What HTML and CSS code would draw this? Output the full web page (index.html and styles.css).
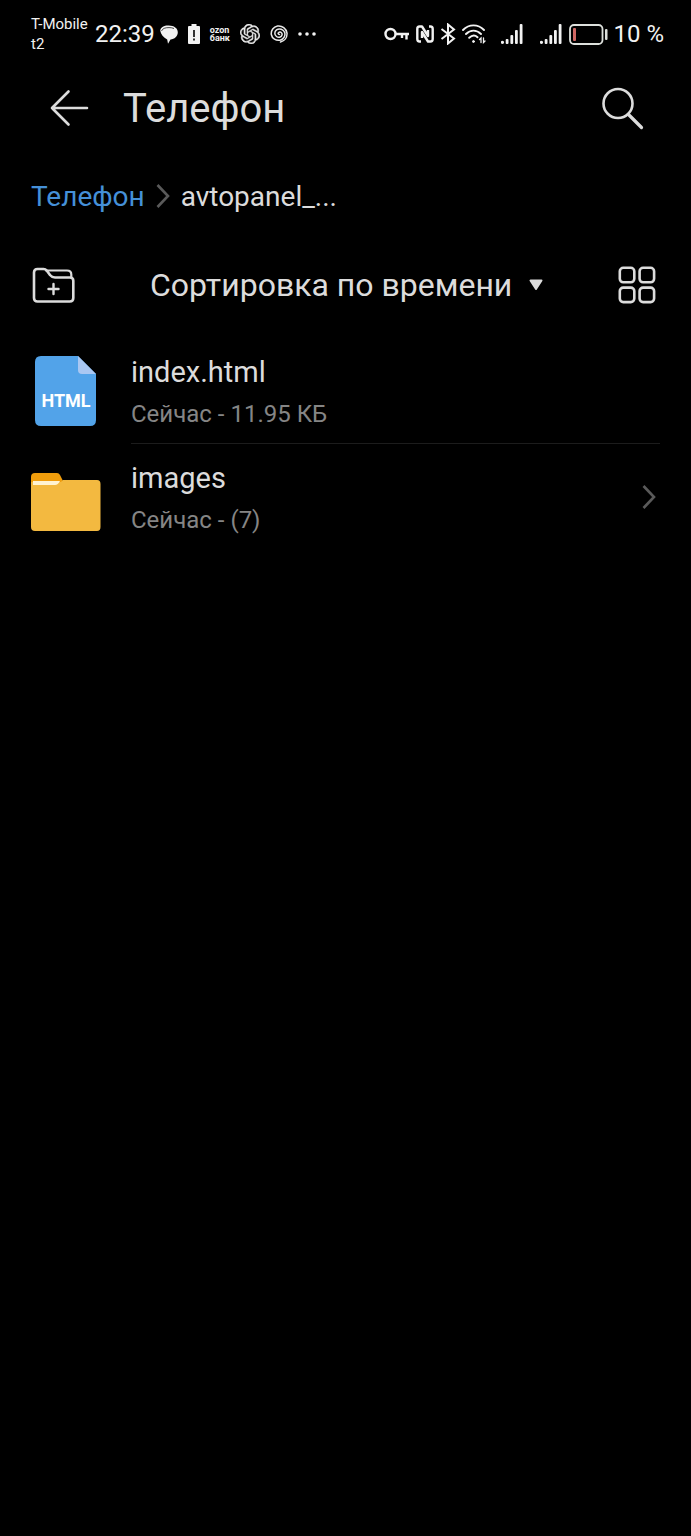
FILE: index.html
```html
<!DOCTYPE html>
<html lang="ru">
<head>
    <meta charset="UTF-8">
    <meta name="viewport" content="width=device-width, initial-scale=1.0">
    <title>Телефон</title>
    <link rel="stylesheet" href="styles.css">
</head>
<body>
    <!-- Строка состояния -->
    <div class="status-bar">
        <div class="status-group">
            <div class="carrier">
                <span>T-Mobile</span>
                <span>t2</span>
            </div>
            <span class="clock">22:39</span>
            <div class="notifications">
                <svg width="18" height="20" viewBox="0 0 18 20">
                    <path fill="#f2f2f2" d="M8 1.500C13.500 1.200 17.800 4 17.800 8.300C17.800 12.500 14.500 15.200 10.500 15.600L8 19.800L7.200 15.400C3.500 13.500 .8 10.500 .2 6.500C.8 3.200 4 1.600 8 1.500Z"/>
                    <path fill="none" stroke="#000" stroke-width="0.700" d="M1.500 7C2.500 4.500 5 3.600 9 3.600C11 3.600 12.500 3.900 14 4.500"/>
                </svg>
                <svg width="12" height="20" viewBox="0 0 12 20">
                    <path fill="#f2f2f2" d="M3.500 0h5v2H11a1 1 0 0 1 1 1v16a1 1 0 0 1-1 1H1a1 1 0 0 1-1-1V3a1 1 0 0 1 1-1h2.500z"/>
                    <path stroke="#000" stroke-width="1.600" d="M6 6v7M6 14.500v2"/>
                </svg>
                <span class="bank"><span>ozon</span><span>банк</span></span>
                <svg width="20" height="20" viewBox="0 0 24 24">
                    <path fill="#e8e8e8" stroke="#e8e8e8" stroke-width="0.500" d="M22.2819 9.8211a5.9847 5.9847 0 0 0-.5157-4.9108 6.0462 6.0462 0 0 0-6.5098-2.9A6.0651 6.0651 0 0 0 4.9807 4.1818a5.9847 5.9847 0 0 0-3.9977 2.9 6.0462 6.0462 0 0 0 .7427 7.0966 5.98 5.98 0 0 0 .511 4.9107 6.051 6.051 0 0 0 6.5146 2.9001A5.9847 5.9847 0 0 0 13.2599 24a6.0557 6.0557 0 0 0 5.7718-4.2058 5.9894 5.9894 0 0 0 3.9977-2.9001 6.0557 6.0557 0 0 0-.7475-7.0729zm-9.022 12.6081a4.4755 4.4755 0 0 1-2.8764-1.0408l.1419-.0804 4.7783-2.7582a.7948.7948 0 0 0 .3927-.6813v-6.7369l2.02 1.1686a.071.071 0 0 1 .038.052v5.5826a4.504 4.504 0 0 1-4.4945 4.4944zm-9.6607-4.1254a4.4708 4.4708 0 0 1-.5346-3.0137l.142.0852 4.783 2.7582a.7712.7712 0 0 0 .7806 0l5.8428-3.3685v2.3324a.0804.0804 0 0 1-.0332.0615L9.74 19.9502a4.4992 4.4992 0 0 1-6.1408-1.6464zM2.3408 7.8956a4.485 4.485 0 0 1 2.3655-1.9728V11.6a.7664.7664 0 0 0 .3879.6765l5.8144 3.3543-2.0201 1.1685a.0757.0757 0 0 1-.071 0l-4.8303-2.7865A4.504 4.504 0 0 1 2.3408 7.872zm16.5963 3.8558L13.1038 8.364 15.1192 7.2a.0757.0757 0 0 1 .071 0l4.8303 2.7913a4.4944 4.4944 0 0 1-.6765 8.1042v-5.6772a.79.79 0 0 0-.407-.667zm2.0107-3.0231l-.142-.0852-4.7735-2.7818a.7759.7759 0 0 0-.7854 0L9.409 9.2297V6.8974a.0662.0662 0 0 1 .0284-.0615l4.8303-2.7866a4.4992 4.4992 0 0 1 6.6802 4.66zM8.3065 12.863l-2.02-1.1638a.0804.0804 0 0 1-.038-.0567V6.0742a4.4992 4.4992 0 0 1 7.3757-3.4537l-.142.0805L8.704 5.459a.7948.7948 0 0 0-.3927.6813zm1.0976-2.3654l2.602-1.4998 2.6069 1.4998v2.9994l-2.5974 1.4997-2.6067-1.4997Z"/>
                </svg>
                <svg width="18" height="18" viewBox="0 0 18 18" fill="none" stroke="#e8e8e8" stroke-width="1.500" stroke-linecap="round">
                    <path d="M9.500 9.500C8 9.500 7.600 8 9 7.300C11 6.500 12.500 8.200 12 10C11.400 12.300 8.500 13 6.500 11.500C4.200 9.800 4.300 6.500 6.500 4.900C9.500 3 13.500 4.300 14.700 7.500C15.700 11 13.500 14.500 10 15.200C6 16 2 13.500 1.300 9.500C.8 5.500 3.500 1.800 7.500 1C12 .3 16.500 3.500 17 8.200C17.300 12.500 14.500 16 10.500 17"/>
                </svg>
                <svg width="18" height="4" viewBox="0 0 18 4" fill="#f2f2f2">
                    <circle cx="2" cy="2" r="1.800"/>
                    <circle cx="9" cy="2" r="1.800"/>
                    <circle cx="16" cy="2" r="1.800"/>
                </svg>
            </div>
        </div>

        <div class="status-group">
            <div class="system">
                <svg width="26" height="14" viewBox="0 0 26 14" fill="none" stroke="#f2f2f2" stroke-width="2.400">
                    <circle cx="6.500" cy="7" r="5"/>
                    <path d="M11.500 7H25M22.500 7v5.500M18 7v4"/>
                </svg>
                <svg width="18" height="18" viewBox="0 0 18 18" fill="none" stroke="#f2f2f2" stroke-width="2.400" stroke-linejoin="round">
                    <path d="M5 16.500H3.500Q1.300 16.500 1.300 14V4Q1.300 1.500 3.500 1.500H6L12 11V5"/>
                    <path d="M13 1.500H14.500Q16.700 1.500 16.700 4V14Q16.700 16.500 14.500 16.500H12L6 7V13"/>
                </svg>
                <svg width="16" height="22" viewBox="0 0 16 22" fill="none" stroke="#f2f2f2" stroke-width="2">
                    <path d="M1.500 6L14 15.500L8 20.500V1.500L14 6.500L1.500 16"/>
                </svg>
                <svg width="24" height="20" viewBox="0 0 24 20" fill="none" stroke="#f2f2f2" stroke-width="1.900" stroke-linecap="round">
                    <path d="M1 6C7-.2 16-.2 22 6M4 10C8.500 5.500 14.500 5.500 19 10M7.200 13.800C10 11.200 13.300 11.200 15.500 13.300"/>
                    <circle cx="11.500" cy="17.500" r="1" fill="#f2f2f2" stroke-width="1"/>
                    <path stroke-width="1.300" d="M19 18.500V14L17.500 15.500M21.500 14V18.500L23 17"/>
                </svg>
            </div>
            <div class="signals">
                <svg width="22" height="20" viewBox="0 0 22 20" fill="#f2f2f2">
                    <circle cx="1.500" cy="18.300" r="1.600"/>
                    <rect x="4.700" y="15" width="2.800" height="5" rx="1"/>
                    <rect x="9.400" y="11" width="2.800" height="9" rx="1"/>
                    <rect x="14" y="6" width="2.800" height="14" rx="1"/>
                    <rect x="18.700" y="0" width="2.800" height="20" rx="1"/>
                </svg>
                <svg width="22" height="20" viewBox="0 0 22 20" fill="#f2f2f2">
                    <circle cx="1.500" cy="18.300" r="1.600"/>
                    <rect x="4.700" y="15" width="2.800" height="5" rx="1"/>
                    <rect x="9.400" y="11" width="2.800" height="9" rx="1"/>
                    <rect x="14" y="6" width="2.800" height="14" rx="1"/>
                    <rect x="18.700" y="0" width="2.800" height="20" rx="1"/>
                </svg>
            </div>
            <svg class="battery" width="39" height="21" viewBox="0 0 39 21">
                <rect x="1" y="1" width="32.500" height="19" rx="4" fill="none" stroke="#dde0dc" stroke-width="1.800"/>
                <rect x="4" y="4" width="3" height="13" rx="1" fill="#cf6763"/>
                <rect x="36" y="5" width="2.500" height="11" rx="1" fill="#dde0dc"/>
            </svg>
            <span class="percent">10 %</span>
        </div>
    </div>

    <!-- Заголовок -->
    <header class="header">
        <button type="button" class="icon-button" aria-label="Назад">
            <svg width="40" height="40" viewBox="0 0 40 40" fill="none" stroke="#dcdcdc" stroke-width="2.600" stroke-linecap="round" stroke-linejoin="round">
                <path d="M18.500 3.500L2 20L18.500 36.500M2 20H37"/>
            </svg>
        </button>
        <h1>Телефон</h1>
        <button type="button" class="icon-button" aria-label="Поиск">
            <svg width="44" height="44" viewBox="0 0 44 44" fill="none" stroke="#dcdcdc" stroke-linecap="round">
                <circle cx="18" cy="17.500" r="14.500" stroke-width="2.600"/>
                <path stroke-width="3.200" d="M28.500 28.500L41.500 41.500"/>
            </svg>
        </button>
    </header>

    <nav class="breadcrumbs">
        <a href="#">Телефон</a>
        <svg width="14" height="24" viewBox="0 0 14 24" fill="none" stroke="#5a5a5a" stroke-width="2.600">
            <path d="M1.500 1L12 12L1.500 23"/>
        </svg>
        <span>avtopanel_...</span>
    </nav>

    <div class="toolbar">
        <button type="button" class="icon-button" aria-label="Новая папка">
            <svg width="44" height="38" viewBox="0 0 44 38" fill="none" stroke="#dcdcdc" stroke-width="2.600" stroke-linecap="round" stroke-linejoin="round">
                <path d="M3 6.500Q3 3 6.500 3H12.500Q14.500 3 15.700 4.500L19 9Q21 11.500 24 11.500H39Q42.300 11.500 42.300 14.800V32Q42.300 35.500 38.800 35.500H6.500Q3 35.500 3 32Z"/>
                <path stroke-width="2.200" d="M15 4.500H36Q40.300 4.500 40.300 8.500V11.500"/>
                <path d="M22.500 18V28M17.500 23H27.500" stroke-width="2.400"/>
            </svg>
        </button>
        <label class="sort">
            <select aria-label="Сортировка">
                <option>Сортировка по времени</option>
            </select>
            <svg width="14" height="12" viewBox="0 0 14 12">
                <path fill="#dcdcdc" stroke="#dcdcdc" stroke-width="2" stroke-linejoin="round" d="M1.500 1.500H12.500L7 10Z"/>
            </svg>
        </label>
        <button type="button" class="icon-button" aria-label="Сетка">
            <svg width="38" height="38" viewBox="0 0 38 38" fill="none" stroke="#dcdcdc" stroke-width="2.600">
                <rect x="1.800" y="1.800" width="14.500" height="14.500" rx="3.500"/>
                <rect x="21.600" y="1.800" width="14.500" height="14.500" rx="3.500"/>
                <rect x="1.800" y="21.600" width="14.500" height="14.500" rx="3.500"/>
                <rect x="21.600" y="21.600" width="14.500" height="14.500" rx="3.500"/>
            </svg>
        </button>
    </div>

    <!-- Список файлов -->
    <ul class="files">
        <li class="file">
            <svg width="70" height="70" viewBox="0 0 70 70">
                <path fill="#52a3e9" d="M10 0H47L65 18V64Q65 70 59 70H10Q4 70 4 64V6Q4 0 10 0Z"/>
                <path fill="#a9c7f2" d="M47 0L65 18H51Q47 18 47 14Z"/>
                <text class="file-type" x="35" y="51" text-anchor="middle">HTML</text>
            </svg>
            <div class="file-info">
                <span class="file-name">index.html</span>
                <span class="file-meta">Сейчас - 11.95 КБ</span>
            </div>
        </li>
        <li class="file">
            <svg width="70" height="70" viewBox="0 0 70 70">
                <path fill="#f09d0c" d="M0 15Q0 11 4 11H26Q28 11 29 13L34 23H0Z"/>
                <path fill="#f3b940" d="M0 20H30L32 18H66Q69.500 18 69.500 22V65Q69.500 69 66 69H4Q0 69 0 65Z"/>
                <path fill="#fff3d2" d="M2 19H29Q27 23 24 23H2Z"/>
            </svg>
            <div class="file-info">
                <span class="file-name">images</span>
                <span class="file-meta">Сейчас - (7)</span>
            </div>
            <svg width="14" height="24" viewBox="0 0 14 24" fill="none" stroke="#5a5a5a" stroke-width="2.600">
                <path d="M1.500 1L12 12L1.500 23"/>
            </svg>
        </li>
    </ul>
</body>
</html>
```

FILE: styles.css
```css
/* Общие стили */
* {
    margin: 0;
    padding: 0;
    box-sizing: border-box;
    font-family: Roboto, "Noto Sans", sans-serif;
}

body {
    min-height: 100vh;
    background-color: #000;
    color: #dcdcdc;
}

svg {
    display: block;
    flex-shrink: 0;
}

/* Строка состояния */
.status-bar {
    display: flex;
    justify-content: space-between;
    height: 68px;
    padding: 0 27px 0 31px;
    color: #f2f2f2;
}

.status-group,
.notifications,
.system,
.signals {
    display: flex;
    align-items: center;
}

.carrier {
    display: flex;
    flex-direction: column;
    width: 64px;
    font-size: 15px;
    line-height: 20px;
}

.clock,
.percent {
    font-size: 24px;
    white-space: nowrap;
}

.notifications {
    gap: 10px;
    margin-left: 5px;
}

.bank {
    display: flex;
    flex-direction: column;
    font-size: 9px;
    font-weight: bold;
    line-height: 8px;
}

.system {
    gap: 6px;
}

.signals {
    gap: 17px;
    margin: 0 7px 0 15px;
}

.battery {
    margin-right: 5px;
}

/* Заголовок */
.header {
    display: flex;
    align-items: center;
    height: 80px;
    padding: 0 47px 0 50px;
}

.header h1 {
    flex: 1;
    margin-left: 33px;
    font-size: 40px;
    font-weight: normal;
}

.icon-button {
    background: none;
    border: none;
    cursor: pointer;
}

.breadcrumbs {
    display: flex;
    align-items: center;
    gap: 11px;
    height: 96px;
    padding: 0 31px;
    font-size: 28px;
}

.breadcrumbs a {
    color: #4590d8;
    text-decoration: none;
}

.toolbar {
    display: flex;
    align-items: center;
    justify-content: space-between;
    height: 82px;
    padding: 0 35px 0 31px;
}

.sort {
    display: flex;
    align-items: center;
    gap: 16px;
}

.sort select {
    appearance: none;
    background: none;
    border: none;
    color: #dcdcdc;
    font-size: 32px;
    cursor: pointer;
}

/* Список файлов */
.files {
    padding: 12px 31px;
    list-style: none;
}

.file {
    display: flex;
    align-items: center;
    gap: 30px;
    height: 106px;
    padding-right: 4px;
}

.file-info {
    display: flex;
    flex: 1;
    flex-direction: column;
    justify-content: center;
    gap: 6px;
    height: 106px;
    padding-top: 4px;
}

.file:not(:last-child) {
    padding-right: 0;
}

.file:not(:last-child) .file-info {
    border-bottom: 1px solid #1c1c1c;
}

.file-name {
    font-size: 29px;
    line-height: 36px;
}

.file-meta {
    color: #858585;
    font-size: 24px;
    line-height: 36px;
}

.file-type {
    fill: #fff;
    font-size: 18px;
    font-weight: bold;
}
```
